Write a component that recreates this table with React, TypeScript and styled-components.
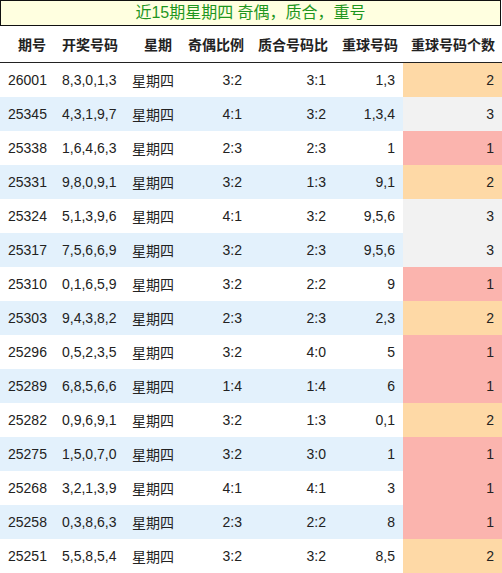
import React from 'react';
import styled, { createGlobalStyle } from 'styled-components';

const GlobalStyle = createGlobalStyle`
  html, body {
    margin: 0;
    padding: 0;
    background: #fff;
  }
  body {
    font-family: "Liberation Sans", "Noto Sans CJK SC", Arial, sans-serif;
    color: #222;
  }
`;

type Row = {
  issue: string;
  nums: string;
  week: string;
  oddEven: string;
  primeComp: string;
  repeat: string;
  count: number;
};

const rows: Row[] = [
  { issue: '26001', nums: '8,3,0,1,3', week: '星期四', oddEven: '3:2', primeComp: '3:1', repeat: '1,3', count: 2 },
  { issue: '25345', nums: '4,3,1,9,7', week: '星期四', oddEven: '4:1', primeComp: '3:2', repeat: '1,3,4', count: 3 },
  { issue: '25338', nums: '1,6,4,6,3', week: '星期四', oddEven: '2:3', primeComp: '2:3', repeat: '1', count: 1 },
  { issue: '25331', nums: '9,8,0,9,1', week: '星期四', oddEven: '3:2', primeComp: '1:3', repeat: '9,1', count: 2 },
  { issue: '25324', nums: '5,1,3,9,6', week: '星期四', oddEven: '4:1', primeComp: '3:2', repeat: '9,5,6', count: 3 },
  { issue: '25317', nums: '7,5,6,6,9', week: '星期四', oddEven: '3:2', primeComp: '2:3', repeat: '9,5,6', count: 3 },
  { issue: '25310', nums: '0,1,6,5,9', week: '星期四', oddEven: '3:2', primeComp: '2:2', repeat: '9', count: 1 },
  { issue: '25303', nums: '9,4,3,8,2', week: '星期四', oddEven: '2:3', primeComp: '2:3', repeat: '2,3', count: 2 },
  { issue: '25296', nums: '0,5,2,3,5', week: '星期四', oddEven: '3:2', primeComp: '4:0', repeat: '5', count: 1 },
  { issue: '25289', nums: '6,8,5,6,6', week: '星期四', oddEven: '1:4', primeComp: '1:4', repeat: '6', count: 1 },
  { issue: '25282', nums: '0,9,6,9,1', week: '星期四', oddEven: '3:2', primeComp: '1:3', repeat: '0,1', count: 2 },
  { issue: '25275', nums: '1,5,0,7,0', week: '星期四', oddEven: '3:2', primeComp: '3:0', repeat: '1', count: 1 },
  { issue: '25268', nums: '3,2,1,3,9', week: '星期四', oddEven: '4:1', primeComp: '4:1', repeat: '3', count: 1 },
  { issue: '25258', nums: '0,3,8,6,3', week: '星期四', oddEven: '2:3', primeComp: '2:2', repeat: '8', count: 1 },
  { issue: '25251', nums: '5,5,8,5,4', week: '星期四', oddEven: '3:2', primeComp: '3:2', repeat: '8,5', count: 2 },
];

const countColors: Record<number, string> = {
  1: '#fbb4ae',
  2: '#fed9a6',
  3: '#f2f2f2',
};

const Page = styled.div`
  width: 502px;
`;

const Title = styled.div`
  box-sizing: border-box;
  width: 501px;
  height: 26px;
  border: 1px solid #111;
  background: #ffffe0;
  color: #1e961e;
  font-size: 16px;
  line-height: 24px;
  text-align: center;
`;

const Table = styled.table`
  width: 502px;
  border-collapse: collapse;
  table-layout: fixed;
  font-size: 14px;
`;

const HeadCell = styled.th<{ $w: number }>`
  box-sizing: border-box;
  width: ${(p) => p.$w}px;
  height: 36px;
  padding: 0 8px;
  text-align: right;
  font-weight: bold;
  white-space: nowrap;
  color: #222;
  border-bottom: 1px solid #222;
`;

const BodyRow = styled.tr<{ $alt: boolean }>`
  background: ${(p) => (p.$alt ? '#e3f1fc' : '#fff')};
  &:last-child td {
    border-bottom: 1px solid #eee;
  }
`;

const Cell = styled.td<{ $align?: 'left' | 'right'; $bg?: string }>`
  height: 34px;
  padding: 0 8px;
  text-align: ${(p) => p.$align ?? 'right'};
  white-space: nowrap;
  background: ${(p) => p.$bg ?? 'transparent'};
  color: #222;
`;

const columns = [
  { label: '期号', w: 54 },
  { label: '开奖号码', w: 70 },
  { label: '星期', w: 56 },
  { label: '奇偶比例', w: 70 },
  { label: '质合号码比', w: 84 },
  { label: '重球号码', w: 69 },
  { label: '重球号码个数', w: 99 },
];

export default function App() {
  return (
    <Page>
      <GlobalStyle />
      <Title>近15期星期四 奇偶，质合，重号</Title>
      <Table>
        <thead>
          <tr>
            {columns.map((c) => (
              <HeadCell key={c.label} $w={c.w}>
                {c.label}
              </HeadCell>
            ))}
          </tr>
        </thead>
        <tbody>
          {rows.map((r, i) => (
            <BodyRow key={r.issue} $alt={i % 2 === 1}>
              <Cell $align="left">{r.issue}</Cell>
              <Cell $align="left">{r.nums}</Cell>
              <Cell $align="left">{r.week}</Cell>
              <Cell>{r.oddEven}</Cell>
              <Cell>{r.primeComp}</Cell>
              <Cell>{r.repeat}</Cell>
              <Cell $bg={countColors[r.count]}>{r.count}</Cell>
            </BodyRow>
          ))}
        </tbody>
      </Table>
    </Page>
  );
}
